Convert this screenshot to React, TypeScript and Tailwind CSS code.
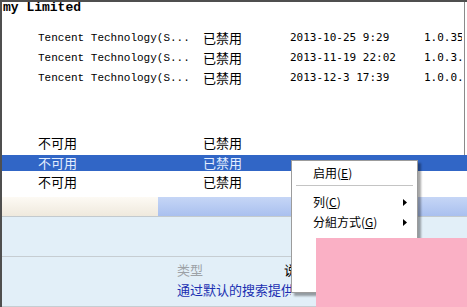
import React from "react";

const mono = { fontFamily: '"Liberation Mono", monospace' };

const topRows = [
  { date: "2013-10-25 9:29", ver: "1.0.35.0" },
  { date: "2013-11-19 22:02", ver: "1.0.3.1" },
  { date: "2013-12-3 17:39", ver: "1.0.0.1" },
];

function Arrow() {
  return (
    <svg width="4" height="7" viewBox="0 0 4 7" className="shrink-0">
      <polygon points="0,0 4,3.5 0,7" fill="#000" />
    </svg>
  );
}

function Cjk({ children, className = "" }: { children: React.ReactNode; className?: string }) {
  return (
    <span className={"font-['Noto_Sans_CJK_SC',sans-serif] " + className}>{children}</span>
  );
}

export default function App() {
  return (
    <div className="relative w-[467px] h-[307px] overflow-hidden bg-white border-l-2 border-t-2 border-[#4f4f4f] flex flex-col text-black">
      {/* upper list, with its right edge line */}
      <div className="w-[463px] border-r border-[#8a8a8a] flex flex-col">
        <div className="h-[12px] leading-[12px] text-[13px] font-bold pl-px" style={mono}>
          my Limited
        </div>
        <div className="mt-[14px] flex flex-col">
          {topRows.map((r) => (
            <div key={r.date} className="h-5 flex items-center pl-[36px]">
              <span className="w-[165px] text-[11px]" style={mono}>
                Tencent Technology(S...
              </span>
              <Cjk className="w-[87px] text-[13px] leading-4">已禁用</Cjk>
              <span className="w-[134px] text-[11px] font-['DejaVu_Sans_Mono',monospace]">
                {r.date}
              </span>
              <span className="w-[38px] overflow-hidden whitespace-nowrap text-[11px] font-['DejaVu_Sans_Mono',monospace]">
                {r.ver}
              </span>
            </div>
          ))}
        </div>
        <div className="mt-[47px] h-4 flex items-center pl-[36px]">
          <Cjk className="w-[165px] text-[13px] leading-4">不可用</Cjk>
          <Cjk className="text-[13px] leading-4">已禁用</Cjk>
        </div>
        <div className="h-1" />
      </div>

      {/* selected row */}
      <div className="h-4 flex items-center pl-[36px] bg-[#3166c6] text-[#e4eeff]">
        <Cjk className="w-[165px] text-[13px] leading-4">不可用</Cjk>
        <Cjk className="text-[13px] leading-4">已禁用</Cjk>
      </div>
      <div className="mt-[3px] h-4 flex items-center pl-[36px]">
        <Cjk className="w-[165px] text-[13px] leading-4">不可用</Cjk>
        <Cjk className="text-[13px] leading-4">已禁用</Cjk>
      </div>

      {/* band */}
      <div className="mt-[7px] h-[20px] flex border-b border-[#c3cace]">
        <div className="w-[156px] bg-linear-to-b from-[#fdfaf4] to-[#efe9dd]" />
        <div className="flex-1 bg-linear-to-b from-[#c6d6f6] to-[#a9c0ef]" />
      </div>

      {/* details panels */}
      <div className="h-[40px] bg-[#e2eff8] border-b border-[#c6cdd2]" />
      <div className="flex-1 bg-[#e2eff8] border-b border-[#c6cdd2] pl-[175px] pt-[5px] flex flex-col">
        <div className="w-[114px] overflow-hidden h-[15px] flex items-center whitespace-nowrap">
          <Cjk className="w-[107px] shrink-0 text-[13px] leading-4 text-[#9da2a7]">类型</Cjk>
          <Cjk className="text-[13px] leading-4">说明</Cjk>
        </div>
        <div className="w-[114px] overflow-hidden whitespace-nowrap">
          <Cjk className="text-[13px] leading-[15px] text-[#1b2fb2]">通过默认的搜索提供</Cjk>
        </div>
      </div>

      {/* context menu */}
      <div className="absolute left-[289px] top-[158px] w-[127px] h-[133px] bg-white border border-[#9c9c9c] shadow-[3px_3px_2px_rgba(0,0,0,0.35)] flex flex-col pt-[3px] text-[12px]">
        <div className="h-[18px] flex items-center pl-[21px]">
          <Cjk>
            启用(<span className="underline">E</span>)
          </Cjk>
        </div>
        <div className="mx-[4px] mt-[3px] h-[2px] border-t border-[#c4c4c4] border-b border-b-white" />
        <div className="mt-[5px] h-5 flex items-center pl-[21px] pr-[10px]">
          <Cjk className="flex-1">
            列(<span className="underline">C</span>)
          </Cjk>
          <Arrow />
        </div>
        <div className="h-5 flex items-center pl-[21px] pr-[10px]">
          <Cjk className="flex-1">
            分組方式(<span className="underline">G</span>)
          </Cjk>
          <Arrow />
        </div>
      </div>

      {/* pink cover */}
      <div className="absolute left-[314px] top-[236px] w-[153px] h-[71px] bg-[#fab0c5]" />
    </div>
  );
}
